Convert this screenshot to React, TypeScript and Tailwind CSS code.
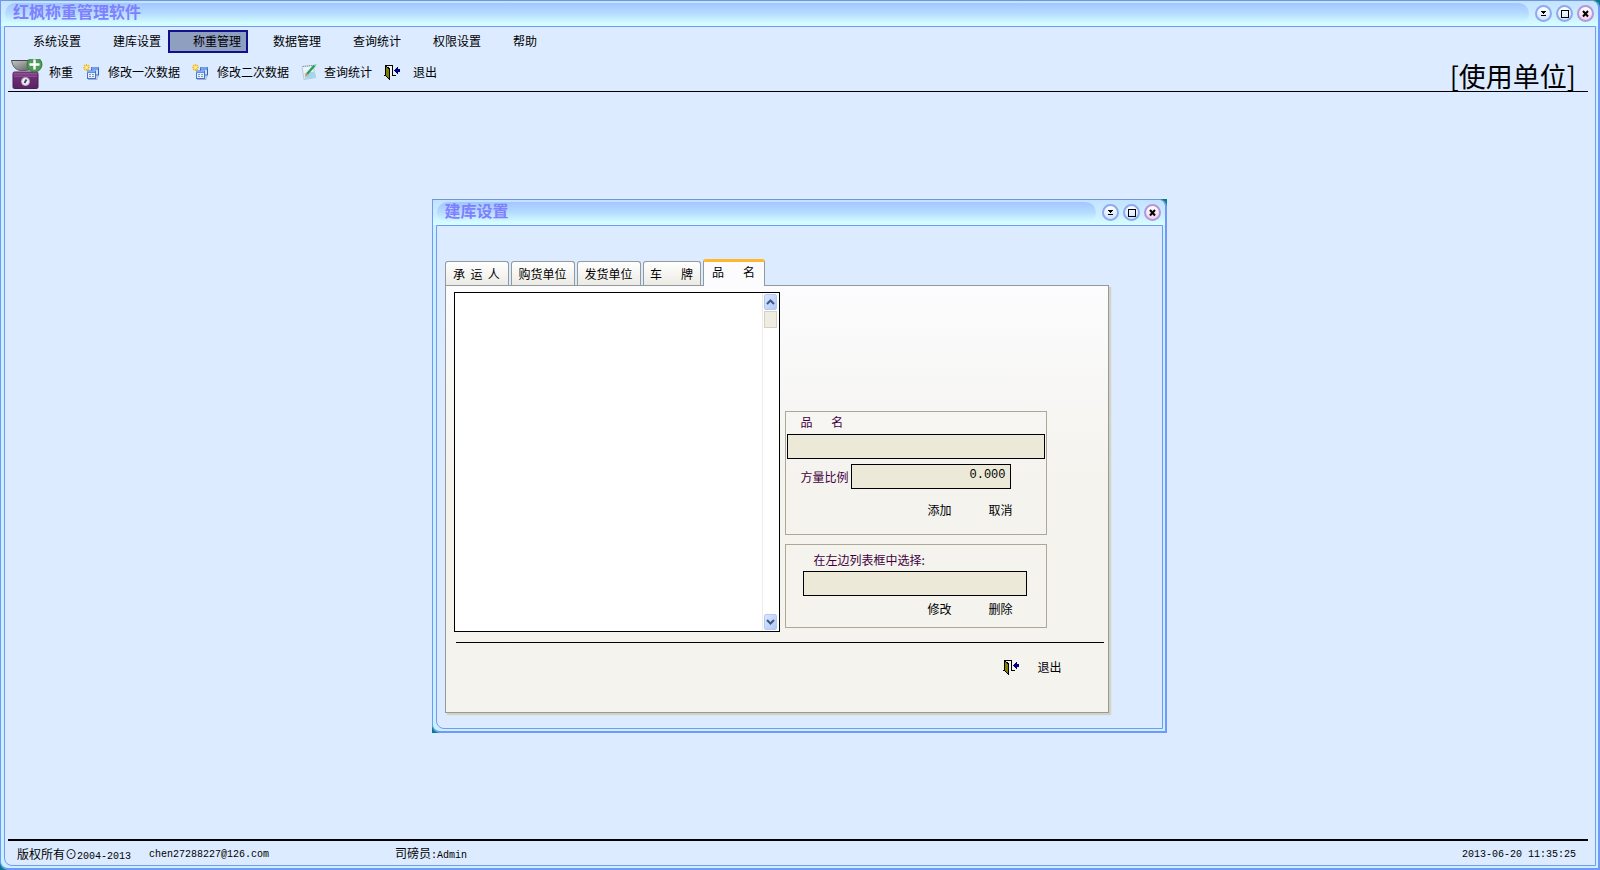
import type { ReactNode } from "react";

const MENU = ["系统设置", "建库设置", "称重管理", "数据管理", "查询统计", "权限设置", "帮助"];
const ACTIVE_MENU = "称重管理";

const TABS = [
  { label: "承  运  人", width: "w-16" },
  { label: "购货单位", width: "w-16" },
  { label: "发货单位", width: "w-16" },
  { label: "车       牌", width: "w-[58px]" },
];

function CaptionButtons() {
  const base = "flex size-[17px] items-center justify-center rounded-full border-2";
  const blue = "border-[#8fa8f2] bg-linear-to-b from-white to-[#cfe4ff]";
  return (
    <div className="flex gap-1">
      <button type="button" aria-label="最小化" className={`${base} ${blue}`}>
        <svg viewBox="0 0 9 9" className="size-[9px] shrink-0" shapeRendering="crispEdges">
          <path d="M2 2h5v1H6v1H5v1H4V4H3V3H2zM2 6h5v1H2z" fill="#000" />
        </svg>
      </button>
      <button type="button" aria-label="最大化" className={`${base} ${blue}`}>
        <svg viewBox="0 0 9 9" className="size-[9px] shrink-0" shapeRendering="crispEdges">
          <path d="M1 1h8v8H1zM2 2v6h6V2z" fill="#000" fillRule="evenodd" />
        </svg>
      </button>
      <button
        type="button"
        aria-label="关闭"
        className={`${base} border-[#b596dc] bg-linear-to-b from-white to-[#f0d2ec]`}
      >
        <svg viewBox="0 0 9 9" className="size-[9px] shrink-0">
          <path d="M2 2l5 5.500M7 2L2 7.500" stroke="#000" strokeWidth="2" />
        </svg>
      </button>
    </div>
  );
}

function Frame({ title, className, children }: { title: string; className: string; children: ReactNode }) {
  return (
    <div className="flex bg-[#008080]">
      <section
        className={`flex flex-col rounded-tr-lg rounded-bl-lg border border-r-2 border-b-2 border-[#7199f8] border-t-[#6d98d6] bg-[#c9f1ff] ${className}`}
      >
        <header className="flex h-[25px] shrink-0 items-center rounded-tr-lg bg-linear-to-b from-[#c4e2ff] via-[#cdeeff] via-60% to-[#d6ffff] pr-1 pl-1">
          <div className="mr-[6px] flex h-[21px] flex-1 items-start rounded-full bg-linear-to-b from-[#a3c6ff] via-[#b6dcff] to-[#d6ffff] pl-2">
            <h1 className="text-base leading-4 font-bold whitespace-nowrap text-[#8080ff]">{title}</h1>
          </div>
          <CaptionButtons />
        </header>
        <div className="mr-[2px] mb-[2px] ml-[3px] flex flex-1 flex-col rounded-bl-lg border border-[#7199f8] bg-[#dcebff]">
          {children}
        </div>
      </section>
    </div>
  );
}

function ScaleIcon() {
  return (
    <svg viewBox="0 0 32 30" className="h-[30px] w-8">
      <defs>
        <linearGradient id="bowl" x1="0" x2="1" y1="0" y2="1">
          <stop offset="0" stopColor="#c6c8c8" />
          <stop offset="1" stopColor="#55585a" />
        </linearGradient>
        <linearGradient id="base" x1="0" x2="0" y1="0" y2="1">
          <stop offset="0" stopColor="#9a5aa0" />
          <stop offset="0.300" stopColor="#6d2f74" />
          <stop offset="1" stopColor="#5a2363" />
        </linearGradient>
      </defs>
      <path d="M0.500 1.500h24q-1 9-9 10h-7Q2 10 0.500 1.500z" fill="url(#bowl)" stroke="#5e6062" />
      <path d="M0.500 1.500h20" stroke="#47494b" />
      <rect x="2" y="13" width="25" height="16.500" rx="1.500" fill="url(#base)" stroke="#4d1d55" />
      <path d="M3 17.500h23" stroke="#8a4c92" />
      <circle cx="14.500" cy="22.500" r="4" fill="#f0f0f4" stroke="#b9a8c0" />
      <path d="M13.500 24l2-3.500" stroke="#3a3f66" strokeWidth="1.800" />
      <circle cx="23.500" cy="5.500" r="7.500" fill="#4f9a56" stroke="#3a7742" />
      <path d="M23.500 0.500v10M18.500 5.500h10" stroke="#fff" strokeWidth="2.400" />
    </svg>
  );
}

function FormsIcon() {
  return (
    <svg viewBox="0 0 17 16" className="h-4 w-[17px]">
      <path d="M8 3h8v8.500H8z" fill="#2f62c4" />
      <path d="M8.500 3h7v2h-7z" fill="#6f9ff0" />
      <path d="M9 5.500h6v5H9z" fill="#cfe0fb" />
      <path d="M4 6.500h9V15H4z" fill="#4474cc" />
      <path d="M4 6.500h8v2H4z" fill="#7fabf2" />
      <path d="M5 9h7v5H5z" fill="#e6effd" />
      <path d="M6 10h2v1H6zM9 10h2v1H9zM6 12h2v1H6zM9 12h2v1H9z" fill="#7f97c4" />
      <path d="M5 15.500h9V12h2" fill="none" stroke="#9fb0cf" />
      <path d="M3.500 0v7M0 3.500h7M1 1l5 5M6 1L1 6" stroke="#f5bb1c" strokeWidth="1.200" />
      <circle cx="3.500" cy="3.500" r="1.400" fill="#fff5a0" />
    </svg>
  );
}

function NoteIcon() {
  return (
    <svg viewBox="0 0 17 16" className="h-4 w-[17px]">
      <path d="M1 2.500l11-1 2.500 12L3 15.500z" fill="#eaf4f8" stroke="#b4cbd6" />
      <path d="M3.500 9l10-1.500 1.500 6L4 15z" fill="#a3d6ea" />
      <path d="M2 2.500l9-1" stroke="#7e909c" strokeDasharray="1 1" />
      <path d="M6 10L13.500 1.500" stroke="#359a62" strokeWidth="2.500" />
      <path d="M4 12.500l1.200-3.500 2.300 2z" fill="#e58a4c" />
      <path d="M12.500 1l2 1.500L15.500 0z" fill="#74c79a" />
    </svg>
  );
}

function ExitIcon() {
  return (
    <svg viewBox="0 0 16 15" className="h-[15px] w-4" shapeRendering="crispEdges">
      <path d="M1 0h8v10h3v1H8V1H1z" fill="#000" />
      <path d="M5 1h3v9H5z" fill="#f4f4f0" />
      <path d="M1 0l5 3v12l-5-4z" fill="#000" />
      <path d="M2 2l3 2v9l-3-2z" fill="#808000" />
      <path d="M0 10h2v1H0z" fill="#000" />
      <path d="M10 5h1V4h1V3h1V2h1v2h2v3h-2v2h-1V8h-1V7h-1V6h-1z" fill="#000080" />
    </svg>
  );
}

const FIELD =
  "h-[25px] rounded-none border border-black bg-[#ece9d8] px-1 font-['Liberation_Mono',monospace] text-xs outline-none";

function ScrollArrow({ up, label }: { up: boolean; label: string }) {
  return (
    <button
      type="button"
      aria-label={label}
      className="flex h-4 w-full shrink-0 items-center justify-center rounded-xs border border-[#b4c8f6] bg-linear-to-br from-[#dbe6ff] to-[#b3c8fb]"
    >
      <svg viewBox="0 0 9 6" className="h-[6px] w-[9px]">
        <path d={up ? "M1 5l3.500-3.500L8 5" : "M1 1l3.500 3.500L8 1"} fill="none" stroke="#41597f" strokeWidth="2" />
      </svg>
    </button>
  );
}

function SetupDialog() {
  return (
    <Frame title="建库设置" className="w-[735px]">
      <div className="pt-[33px] pr-[53px] pb-[15px] pl-2">
        <div role="tablist" className="flex items-end">
          {TABS.map((tab) => (
            <button
              key={tab.label}
              type="button"
              role="tab"
              aria-selected={false}
              className={`mr-[2px] h-6 rounded-t-[3px] border border-b-0 border-[#919b9c] bg-linear-to-b from-white to-[#ecebe5] whitespace-pre ${tab.width}`}
            >
              {tab.label}
            </button>
          ))}
          <button
            type="button"
            role="tab"
            aria-selected
            className="-mb-px h-[27px] w-[62px] rounded-t-[3px] border border-t-3 border-b-0 border-[#919b9c] border-t-[#ffb82e] bg-[#fcfcfe] pb-1 whitespace-pre"
          >
            {"品       名"}
          </button>
        </div>
        <div
          role="tabpanel"
          className="border border-[#919b9c] bg-linear-to-b from-[#fcfcfe] to-[#f4f3ee] to-45% px-2 pt-[6px] pb-[37px] shadow-[2px_2px_1px_#d5d2c2]"
        >
          <div className="flex gap-[5px]">
            <div className="flex h-[340px] w-[326px] border border-black bg-white">
              <ul role="listbox" aria-label="品名列表" className="flex-1" />
              <div className="flex w-[17px] flex-col border-l border-[#eeede5] py-px pr-[2px] pl-px">
                <ScrollArrow up label="向上滚动" />
                <div className="mt-px h-[17px] border border-[#d4d1c2] bg-[#efede2]" />
                <div className="flex-1" />
                <ScrollArrow up={false} label="向下滚动" />
              </div>
            </div>
            <div className="flex w-[262px] flex-col justify-end gap-[9px] pb-1">
              <div className="h-[124px] border border-[#aca899] px-px">
                <label htmlFor="goods" className="block pt-[2px] pb-1 pl-[14px] leading-4 whitespace-pre text-[#400040]">
                  {"品       名"}
                </label>
                <input id="goods" className={`${FIELD} block w-full`} />
                <div className="mt-[5px] flex items-center pl-[14px]">
                  <label htmlFor="ratio" className="mr-[2px] text-[#400040]">
                    方量比例
                  </label>
                  <input id="ratio" defaultValue="0.000" className={`${FIELD} w-40 pb-1 text-right`} />
                </div>
                <div className="mt-[13px] flex justify-end gap-[37px] pr-[32px] leading-4">
                  <button type="button">添加</button>
                  <button type="button">取消</button>
                </div>
              </div>
              <div className="h-[84px] border border-[#aca899] pt-[7px] pl-[17px]">
                <label htmlFor="selected" className="block pb-[3px] pl-[11px] leading-4 text-[#400040]">
                  在左边列表框中选择:
                </label>
                <input id="selected" className={`${FIELD} block w-56`} />
                <div className="mt-[5px] flex justify-end gap-[37px] pr-[33px] leading-4">
                  <button type="button">修改</button>
                  <button type="button">删除</button>
                </div>
              </div>
            </div>
          </div>
          <hr className="mt-[10px] -mr-1 ml-[2px] border-black" />
          <div className="mt-4 flex justify-end pr-[38px]">
            <button type="button" className="flex items-center gap-[18px] leading-4">
              <ExitIcon />
              退出
            </button>
          </div>
        </div>
      </div>
    </Frame>
  );
}

export default function App() {
  const tool = "flex items-center";
  return (
    <div className="grid min-h-screen bg-[#008080] font-['Noto_Sans_CJK_SC',sans-serif] text-xs text-black">
      <Frame title="红枫称重管理软件" className="flex-1">
        <div className="mr-[7px] ml-[3px] flex flex-1 flex-col">
          <nav className="flex pt-[3px]">
            {MENU.map((item) => (
              <button
                key={item}
                type="button"
                className={`h-[23px] w-20 border-2 pb-[2px] pl-[23px] text-left leading-4 whitespace-nowrap ${
                  item === ACTIVE_MENU ? "border-[#10108c] bg-[#8f9fc0]" : "border-transparent"
                }`}
              >
                {item}
              </button>
            ))}
          </nav>
          <div className="flex h-[39px] items-center border-b border-black pr-3 pl-[3px]">
            <button type="button" className={`${tool} mt-1 mr-[10px] gap-[6px]`}>
              <ScaleIcon />
              <span className="mb-[5px]">称重</span>
            </button>
            <button type="button" className={`${tool} mr-3 gap-2`}>
              <FormsIcon />
              修改一次数据
            </button>
            <button type="button" className={`${tool} mr-3 gap-2`}>
              <FormsIcon />
              修改二次数据
            </button>
            <button type="button" className={`${tool} mr-3 gap-[6px]`}>
              <NoteIcon />
              查询统计
            </button>
            <button type="button" className={`${tool} gap-[13px]`}>
              <ExitIcon />
              退出
            </button>
            <div className="ml-auto self-end text-[27px] leading-[30px]">[使用单位]</div>
          </div>
          <main className="flex flex-1 items-center justify-center pt-px pl-[2px]">
            <SetupDialog />
          </main>
          <footer className="flex h-[26px] items-center border-t-2 border-black pt-[3px] pr-3 pl-[9px] font-['Liberation_Mono','Noto_Sans_CJK_SC',monospace] text-[10px]">
            <div className="w-[132px]">
              <span className="text-xs">版权所有</span>
              <span className="font-['Noto_Sans_CJK_SC',sans-serif] text-xs">⊙</span>
              2004-2013
            </div>
            <div className="w-[246px]">chen27288227@126.com</div>
            <div>
              <span className="text-xs">司磅员</span>:Admin
            </div>
            <time className="ml-auto">2013-06-20 11:35:25</time>
          </footer>
        </div>
      </Frame>
    </div>
  );
}
